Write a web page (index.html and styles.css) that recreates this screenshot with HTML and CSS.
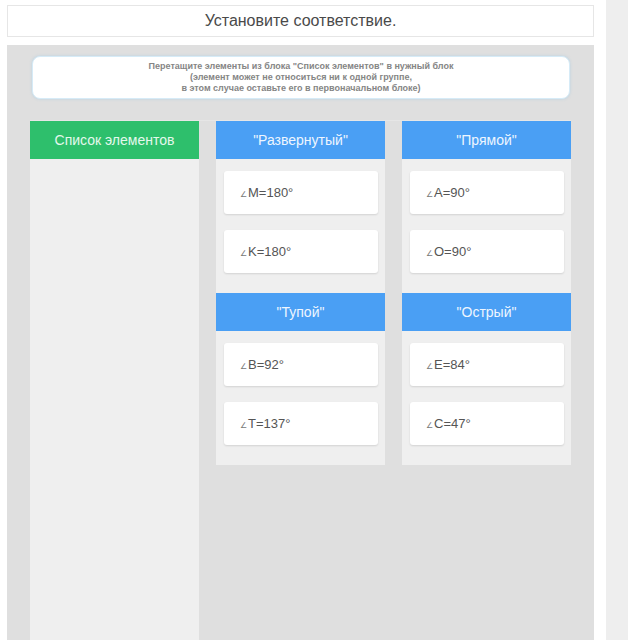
FILE: index.html
```html
<!DOCTYPE html>
<html lang="ru">
<head>
    <meta charset="UTF-8">
    <meta name="viewport" content="width=device-width, initial-scale=1.0">
    <title>Установите соответствие</title>
    <link rel="stylesheet" href="styles.css">
</head>
<body>
    <div class="page">
        <main class="task">
            <!-- Task title -->
            <div class="task-title">Установите соответствие.</div>

            <!-- Drag and drop board -->
            <div class="board">
                <div class="hint">
                    Перетащите элементы из блока "Список элементов" в нужный блок<br>
                    (элемент может не относиться ни к одной группе,<br>
                    в этом случае оставьте его в первоначальном блоке)
                </div>

                <div class="columns">
                    <!-- Source list -->
                    <div class="column source">
                        <div class="column-head green">Список элементов</div>
                    </div>

                    <!-- Middle groups -->
                    <div class="column">
                        <div class="group">
                            <div class="column-head">"Развернутый"</div>
                            <div class="cards">
                                <div class="card"><span class="angle">∠</span>M=180°</div>
                                <div class="card"><span class="angle">∠</span>K=180°</div>
                            </div>
                        </div>
                        <div class="group">
                            <div class="column-head">"Тупой"</div>
                            <div class="cards">
                                <div class="card"><span class="angle">∠</span>B=92°</div>
                                <div class="card"><span class="angle">∠</span>T=137°</div>
                            </div>
                        </div>
                    </div>

                    <!-- Right groups -->
                    <div class="column">
                        <div class="group">
                            <div class="column-head">"Прямой"</div>
                            <div class="cards">
                                <div class="card"><span class="angle">∠</span>A=90°</div>
                                <div class="card"><span class="angle">∠</span>O=90°</div>
                            </div>
                        </div>
                        <div class="group">
                            <div class="column-head">"Острый"</div>
                            <div class="cards">
                                <div class="card"><span class="angle">∠</span>E=84°</div>
                                <div class="card"><span class="angle">∠</span>C=47°</div>
                            </div>
                        </div>
                    </div>
                </div>
            </div>
        </main>

        <!-- Side strip -->
        <aside class="sidebar"></aside>
    </div>
</body>
</html>
```

FILE: styles.css
```css
/* Basic Reset */
* {
    margin: 0;
    padding: 0;
    box-sizing: border-box;
    font-family: 'Liberation Sans', Arial, Helvetica, sans-serif;
}

html, body {
    height: 100%;
    overflow: hidden;
    background-color: #ffffff;
}

/* Page Layout */
.page {
    display: flex;
    height: 100vh;
    padding-left: 7px;
}

.task {
    width: 587px;
    display: flex;
    flex-direction: column;
    padding-top: 5px;
}

.sidebar {
    width: 22px;
    margin-left: 12px;
    background-color: #eeeeee;
}

/* Title */
.task-title {
    height: 32px;
    border: 1px solid #e6e6e6;
    background-color: #fff;
    text-align: center;
    font-size: 16px;
    line-height: 30px;
    color: #4a4a4a;
    margin-bottom: 8px;
}

/* Board */
.board {
    flex: 1;
    display: flex;
    flex-direction: column;
    background-color: #dfdfdf;
    padding: 11px 23px 0 23px;
}

.hint {
    height: 43px;
    margin: 0 1px 22px 2px;
    padding-top: 4px;
    background-color: #fff;
    border: 1px solid #d6ebf7;
    border-radius: 8px;
    box-shadow: 0 0 3px rgba(120, 190, 235, 0.35);
    text-align: center;
    font-size: 9px;
    font-weight: bold;
    line-height: 11px;
    color: #858585;
}

/* Columns */
.columns {
    flex: 1;
    display: grid;
    grid-template-columns: 169px 169px 169px;
    gap: 17px;
    align-items: start;
    border-top: 1px solid #e6e6e6;
    margin-top: -1px;
}

.column {
    background-color: #efefef;
    padding-bottom: 20px;
}
.column.source {
    align-self: stretch;
}

.column-head {
    height: 38px;
    line-height: 38px;
    text-align: center;
    font-size: 14px;
    color: #eef6ff;
    background-color: #4a9ff4;
}
.column-head.green {
    background-color: #2ebf6c;
    color: #e4f8ec;
}

.group + .group {
    margin-top: 20px;
}

.cards {
    display: flex;
    flex-direction: column;
    gap: 16px;
    padding: 12px 7px 0 8px;
}

.card {
    height: 43px;
    display: flex;
    align-items: center;
    padding-left: 16px;
    background-color: #fff;
    border-radius: 3px;
    box-shadow: 0 1px 2px rgba(0, 0, 0, 0.12);
    font-size: 13px;
    color: #555;
}

.angle {
    font-size: 8px;
    color: #777;
    margin-right: 1px;
    align-self: center;
    padding-top: 3px;
}
```
